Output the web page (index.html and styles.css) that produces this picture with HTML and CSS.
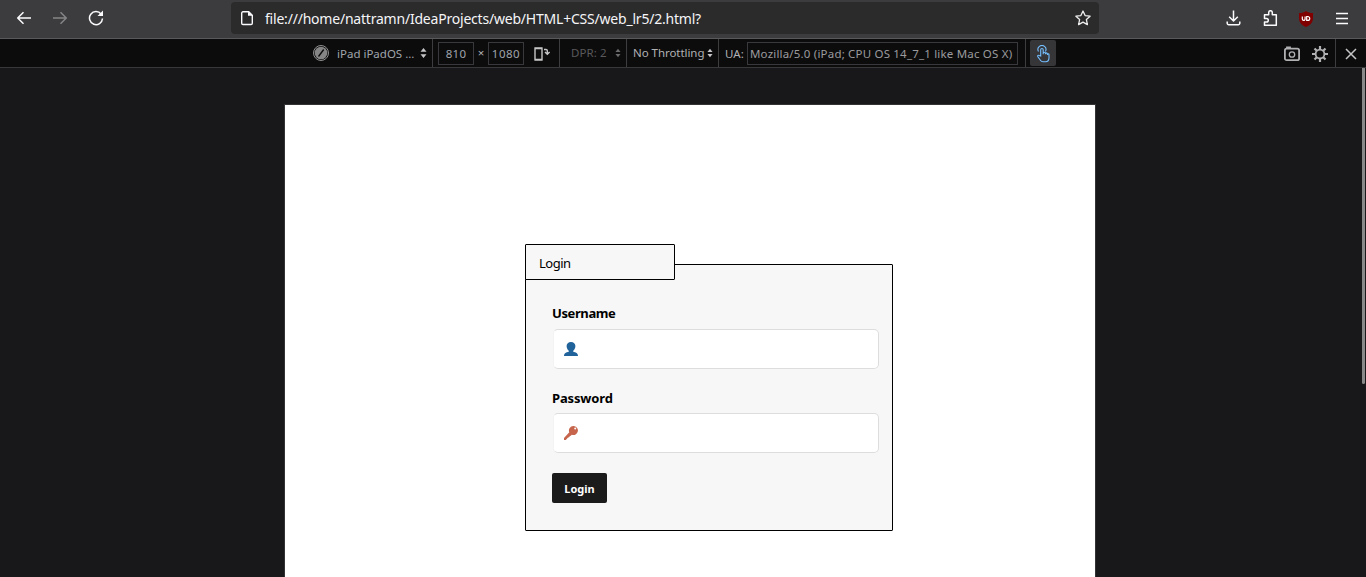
FILE: index.html
```html
<!DOCTYPE html>
<html lang="en">
<head>
<meta charset="utf-8">
<title>Login</title>
<link rel="stylesheet" href="styles.css">
</head>
<body>
<header class="navbar">
  <svg class="nav-icon back" viewBox="0 0 16 16"><path d="M15 8H1.500M7.500 2.200L1.700 8l5.800 5.800"/></svg>
  <svg class="nav-icon forward" viewBox="0 0 16 16"><path d="M1 8h13.500M8.500 2.200L14.300 8l-5.800 5.800"/></svg>
  <svg class="nav-icon reload" viewBox="0 0 16 16"><path d="M13.200 4.200A6.500 6.500 0 1 0 14.500 8.500"/><path class="solid" d="M15 .5v5.500H9.500z"/></svg>
  <div class="urlbar">
    <svg class="page-icon" viewBox="0 0 14 16"><path d="M3 1.800h5.700L12.300 5.400v7.800a1.300 1.300 0 0 1-1.300 1.300H3a1.300 1.300 0 0 1-1.300-1.300V3.100A1.300 1.300 0 0 1 3 1.800z"/><path class="solid" d="M8 1.500v4.300h4.500z"/></svg>
    <span class="url">file:///home/nattramn/IdeaProjects/web/HTML+CSS/web_lr5/2.html?</span>
    <svg class="star" viewBox="0 0 16 16"><path d="M8 1l2.100 4.600 5 .6-3.700 3.400 1 5L8 12.100l-4.400 2.500 1-5L.900 6.200l5-.6z"/></svg>
  </div>
  <div class="actions">
    <svg class="nav-icon" viewBox="0 0 16 16"><path d="M7.500 .5v10.300M3.200 6.700L7.500 11l4.300-4.300M1.200 11.500v1.700a1.500 1.500 0 0 0 1.500 1.500h9.600a1.500 1.500 0 0 0 1.500-1.500v-1.700"/></svg>
    <svg class="nav-icon" viewBox="0 0 16 16"><path d="M2.500 7.200V4.700h4.200V2.500a1.800 1.800 0 0 1 3.600 0v2.200h4v10.600H2.500v-3.300h2a1.800 1.800 0 0 0 0-3.600h-2z"/></svg>
    <svg class="shield" viewBox="0 0 16 16"><path d="M8 0c2 1.500 4 2 7 2v5c0 4.500-2.500 7-7 9-4.500-2-7-4.500-7-9V2c3 0 5-.5 7-2z" fill="#800000"/><path d="M4.300 5.500V8a1.400 1.400 0 0 0 2.800 0V5.500M8.700 5.500v3.900h1.100a1.950 1.950 0 0 0 0-3.900z" fill="none" stroke="#fff" stroke-width="1.200"/></svg>
    <svg class="nav-icon" viewBox="0 0 16 16"><path d="M2 3.500h12M2 8.500h12M2 13.500h12"/></svg>
  </div>
</header>

<div class="devbar">
  <div class="segment device">
    <svg class="no-device" viewBox="0 0 16 16"><circle cx="8" cy="8" r="7.500" fill="none" stroke="#909090"/><circle cx="8" cy="8" r="6.300" fill="#858586"/><path d="M5.500 11.500l5.200-7" stroke="#0c0c0d" stroke-width="1.300"/></svg>
    <span class="device-name">iPad iPadOS ...</span>
    <svg class="arrows" viewBox="0 0 7 10"><path d="M.5 3.700L3.500 0l3 3.700zM.5 6.300h6L3.500 10z"/></svg>
  </div>
  <div class="segment size">
    <span class="box">810</span>
    <span class="times">×</span>
    <span class="box wide">1080</span>
    <svg class="rotate" viewBox="0 0 17 14"><rect x="1" y="1" width="7" height="12"/><path d="M1 1.500h7M1 12.500h7M10 2.500h2q1.300 0 1.300 1.300v3M11 5l2.300 2.300L15.600 5"/></svg>
  </div>
  <div class="segment dpr"><span class="dpr-text">DPR: 2</span><svg class="arrows" viewBox="0 0 7 10"><path d="M.5 3.700L3.500 0l3 3.700zM.5 6.300h6L3.500 10z"/></svg></div>
  <div class="segment throttle"><span class="throttle-text">No Throttling</span><svg class="arrows" viewBox="0 0 7 10"><path d="M.5 3.700L3.500 0l3 3.700zM.5 6.300h6L3.500 10z"/></svg></div>
  <div class="segment agent"><span class="ua-label">UA:</span><span class="box ua"><span class="ua-text">Mozilla/5.0 (iPad; CPU OS 14_7_1 like Mac OS X)</span></span></div>
  <div class="touch">
    <svg viewBox="0 0 16 18"><path d="M5.700 11V4.700a1.250 1.250 0 0 1 2.500 0v4.500V8.300a1.100 1.100 0 0 1 2.200 0v1V8.900a1 1 0 0 1 2 0v1V9.700a.8.800 0 0 1 1.600 0v3.100c0 2.500-1.400 4-3.400 4H8c-1.300 0-1.900-.5-2.600-1.500l-2.700-3.800c-.5-1 .7-1.700 1.500-1z"/><path d="M3.500 6.500a4 4 0 1 1 6.900 0"/></svg>
  </div>
  <div class="tools">
    <svg viewBox="0 0 16 16"><path d="M3 2V1.500h3V2"/><rect x=".9" y="2.700" width="14.200" height="11.500" rx="1.800"/><circle cx="8" cy="8.500" r="2.700" stroke-width="1.300"/></svg>
    <svg viewBox="0 0 16 16"><circle cx="8" cy="8" r="4.400"/><path stroke-width="2.200" d="M8 0v3.500M8 12.500V16M0 8h3.500M12.500 8H16M2.500 2.500l2.300 2.300M11.200 11.200l2.300 2.300M13.500 2.500l-2.300 2.300M4.800 11.200l-2.300 2.300"/></svg>
  </div>
  <div class="close"><svg viewBox="0 0 12 12"><path d="M1 1l10 10M11 1L1 11"/></svg></div>
</div>

<main class="viewport">
  <div class="page">
    <form class="login">
      <h1 class="tab"><span class="tab-text">Login</span></h1>
      <div class="panel">
        <label class="label username">Username</label>
        <div class="field"><svg viewBox="0 0 14 14"><path d="M7 0C4.300 0 2.600 1.700 2.600 4c0 2.200 1 3.800 2.200 4.700v1.100C2.300 10.500 0 11 0 14h14c0-3-2.300-3.500-4.800-4.200V8.700c1.200-.9 2.200-2.500 2.200-4.700 0-2.300-1.700-4-4.400-4z" fill="#20639b"/></svg></div>
        <label class="label password">Password</label>
        <div class="field"><svg viewBox="0 0 14 14"><path fill-rule="evenodd" d="M9.500 0a4.500 4.500 0 1 1-1.700 8.700L6.700 9.800l-1 .4-.6 1-1 .2-1 1L1.800 14H0v-2l5.300-5.700A4.500 4.500 0 0 1 9.500 0zM11.200 1.600a1 1 0 1 0 0 2 1 1 0 0 0 0-2z" fill="#c6644c"/></svg></div>
        <button class="submit" type="button"><span class="submit-text">Login</span></button>
      </div>
    </form>
  </div>
  <div class="scrollbar"></div>
</main>
</body>
</html>
```

FILE: styles.css
```css
* { box-sizing: border-box; }
body {
  margin: 0;
  height: 577px;
  overflow: hidden;
  background: #18181a;
  font-family: "Noto Sans", sans-serif;
}
svg { display: block; flex: none; }

.navbar {
  display: flex;
  align-items: center;
  height: 39px;
  padding: 0 16px;
  background: #3c3c3e;
  border-bottom: 1px solid #59595b;
}
.nav-icon {
  width: 16px;
  height: 16px;
  fill: none;
  stroke: #fbfbfe;
  stroke-width: 1.5;
  stroke-linejoin: round;
}
.navbar .nav-icon { margin-top: -2px; }
.nav-icon .solid, .page-icon .solid { fill: #fbfbfe; stroke: none; }
.forward { margin-left: 20px; stroke: #858587; }
.reload { margin-left: 20px; }
.urlbar {
  display: flex;
  align-items: center;
  width: 868px;
  height: 32px;
  margin: -2px 0 0 127px;
  padding: 0 8px 0 9px;
  border-radius: 4px;
  background: #2b2b2c;
}
.page-icon { width: 14px; height: 16px; fill: none; stroke: #fbfbfe; stroke-width: 1.4; }
.url {
  margin: 1px 0 0 11px;
  color: #f5f5f7;
  font: 14px/20px "Noto Sans", sans-serif;
  letter-spacing: -0.21px;
  white-space: nowrap;
}
.star { width: 16px; height: 16px; margin-left: auto; fill: none; stroke: #eeeeef; stroke-width: 1.3; stroke-linejoin: round; }
.actions { display: flex; gap: 20px; margin-left: 127px; }
.shield { width: 16px; height: 16px; margin-top: -1px; }

.devbar {
  display: flex;
  height: 29px;
  padding-left: 313px;
  background: #0c0c0d;
  border-bottom: 1px solid #38383a;
  color: #b1b1b3;
  font-size: 11.5px;
  line-height: 16px;
  white-space: nowrap;
}
.segment { display: flex; align-items: center; border-right: 1px solid #3d3d3f; }
.arrows { width: 7px; height: 10px; fill: #c5c5c7; }
.device { width: 120px; }
.no-device { width: 16px; height: 16px; }
.device-name { width: 83px; margin: 1px 0 0 8px; color: #a0a5ac; }
.size { width: 127px; padding-left: 5px; }
.box {
  width: 36px;
  height: 23px;
  border: 1px solid #38383d;
  color: #a0a5ac;
  text-align: center;
  line-height: 21px;
  letter-spacing: 0.3px;
}
.box.wide { letter-spacing: 0.5px; }
.times { width: 14px; text-align: center; }
.rotate { width: 17px; height: 14px; margin: 1px 0 0 10px; fill: none; stroke: #c5c5c7; stroke-width: 1.4; }
.dpr { width: 67px; padding-left: 11px; color: #59595b; }
.dpr-text { width: 44px; letter-spacing: 0.1px; }
.dpr .arrows { width: 6px; fill: #6b6b6d; }
.throttle { width: 92px; padding-left: 6px; }
.throttle-text { width: 74px; letter-spacing: -0.05px; }
.throttle .arrows { width: 6px; }
.agent { width: 307px; padding-left: 6px; }
.ua-label { width: 22px; margin-top: 1px; }
.box.ua { width: 271px; padding-left: 2px; text-align: left; color: #9b9b9d; letter-spacing: 0.19px; }
.touch {
  display: flex;
  align-items: center;
  justify-content: center;
  width: 26px;
  height: 26px;
  margin: 1px 0 0 4px;
  border-radius: 2px;
  background: #363639;
}
.touch svg { width: 16px; height: 18px; margin-top: 2px; fill: none; stroke: #75bfff; stroke-width: 1.1; }
.tools { display: flex; align-items: center; gap: 12px; margin-left: auto; padding-right: 7px; border-right: 1px solid #3d3d3f; }
.tools svg { width: 16px; height: 16px; margin-top: 2px; fill: none; stroke: #b1b1b3; stroke-width: 1.8; }
.close { display: flex; align-items: center; justify-content: center; width: 30px; }
.close svg { width: 12px; height: 12px; margin-top: 2px; stroke: #c5c5c7; stroke-width: 1.5; }

.viewport { display: flex; justify-content: space-between; height: 509px; padding-left: 284px; }
.page {
  width: 812px;
  height: 480px;
  margin-top: 36px;
  padding: 139px 0 0 240px;
  border: 1px solid #333335;
  background: #fff;
}
.scrollbar { width: 3px; height: 316px; margin-right: 1px; border-radius: 0 0 2px 2px; background: #89898a; }
.login { width: 368px; color: #000; }
.tab {
  position: relative;
  width: 150px;
  height: 36px;
  margin: 0;
  padding: 8px 0 0 13px;
  border: 1px solid #000;
  border-radius: 1px;
  background: #f7f7f7;
  font-size: 13px;
  font-weight: 400;
  line-height: 20px;
  letter-spacing: -0.5px;
}
.panel {
  display: flex;
  flex-direction: column;
  align-items: flex-start;
  height: 267px;
  margin-top: -16px;
  padding: 38px 13px 0 26px;
  border: 1px solid #000;
  border-radius: 1px;
  background: #f7f7f7;
}
.label { height: 20px; font-size: 13px; font-weight: 700; line-height: 20px; letter-spacing: -0.4px; }
.field {
  display: flex;
  align-items: center;
  width: 326px;
  height: 40px;
  margin: 6px 0 0 1px;
  padding-left: 10px;
  border: 1px solid #ddd;
  border-left-color: #f3f3f3;
  border-radius: 5px;
  background: #fff;
}
.field svg { width: 14px; height: 14px; }
.password { margin-top: 19px; letter-spacing: -0.15px; }
.password + .field { margin-top: 5px; }
.submit {
  width: 55px;
  height: 30px;
  margin-top: 20px;
  padding: 2px 0 0;
  border: 0;
  border-radius: 2px;
  background: #1b1b1b;
  color: #fff;
  font: 700 11px/18px "Noto Sans", sans-serif;
}
```
